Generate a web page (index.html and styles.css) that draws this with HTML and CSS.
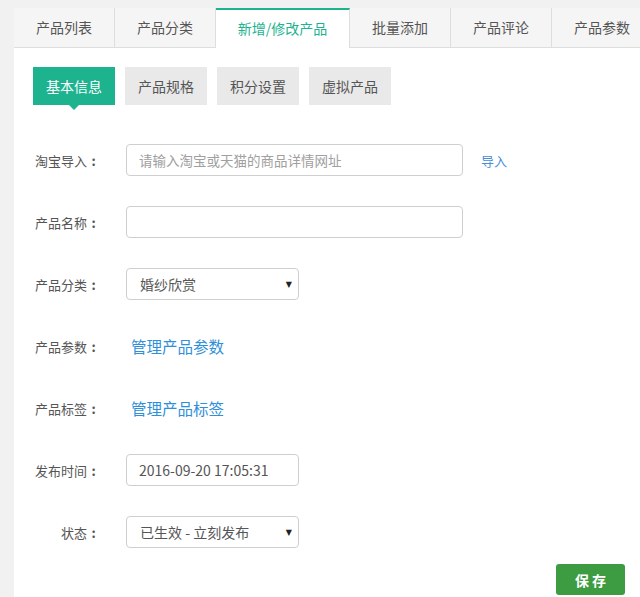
FILE: index.html
```html
<!DOCTYPE html>
<html lang="zh-CN">
<head>
<meta charset="utf-8">
<title>新增/修改产品</title>
<link rel="stylesheet" href="styles.css">
</head>
<body>
<div class="panel">
  <ul class="tabs">
    <li class="tab">产品列表</li>
    <li class="tab">产品分类</li>
    <li class="tab active">新增/修改产品</li>
    <li class="tab">批量添加</li>
    <li class="tab">产品评论</li>
    <li class="tab">产品参数</li>
  </ul>
  <div class="body">
    <div class="subtabs">
      <span class="subtab on">基本信息</span>
      <span class="subtab">产品规格</span>
      <span class="subtab">积分设置</span>
      <span class="subtab">虚拟产品</span>
    </div>
    <form class="form">
      <div class="row">
        <label class="lbl">淘宝导入<span class="colon">:</span></label>
        <input class="inp wide" type="text" placeholder="请输入淘宝或天猫的商品详情网址">
        <a class="imp" href="#">导入</a>
      </div>
      <div class="row">
        <label class="lbl">产品名称<span class="colon">:</span></label>
        <input class="inp wide" type="text">
      </div>
      <div class="row">
        <label class="lbl">产品分类<span class="colon">:</span></label>
        <span class="sel"><span class="seltext">婚纱欣赏</span><span class="arrow">▼</span></span>
      </div>
      <div class="row">
        <label class="lbl">产品参数<span class="colon">:</span></label>
        <a class="big" href="#">管理产品参数</a>
      </div>
      <div class="row">
        <label class="lbl">产品标签<span class="colon">:</span></label>
        <a class="big" href="#">管理产品标签</a>
      </div>
      <div class="row">
        <label class="lbl">发布时间<span class="colon">:</span></label>
        <input class="inp narrow" type="text" value="2016-09-20 17:05:31">
      </div>
      <div class="row">
        <label class="lbl">状态<span class="colon">:</span></label>
        <span class="sel"><span class="seltext">已生效 - 立刻发布</span><span class="arrow">▼</span></span>
      </div>
      <div class="actions">
        <button class="save" type="button">保 存</button>
      </div>
    </form>
  </div>
</div>
</body>
</html>
```
FILE: styles.css
```css
* { box-sizing: border-box; }
html, body { margin: 0; padding: 0; }
body {
  background: #f1f1f1;
  font-family: "Noto Sans CJK SC", "Liberation Sans", sans-serif;
  color: #555;
  height: 597px;
  overflow: hidden;
  padding: 8px 0 0 14px;
}
.panel {
  background: #fff;
  height: 589px;
  overflow: hidden;
}
.tabs {
  list-style: none;
  margin: 0;
  padding: 0;
  display: flex;
  height: 40px;
  background: #f5f5f5;
  border-bottom: 1px solid #dedede;
}
.tab {
  width: 101px;
  height: 39px;
  line-height: 39px;
  text-align: center;
  font-size: 14px;
  color: #555;
  border-right: 1px solid #dedede;
  flex: none;
}
.tab.active {
  width: 134px;
  background: #fff;
  color: #1db38f;
  border-top: 2px solid #1db38f;
  height: 40px;
  line-height: 36px;
}
.body {
  padding: 19px 0 0 19px;
}
.subtabs {
  display: flex;
  gap: 10px;
}
.subtab {
  position: relative;
  width: 82px;
  height: 38px;
  line-height: 38px;
  text-align: center;
  font-size: 14px;
  color: #555;
  background: #e9e9e9;
}
.subtab.on {
  background: #1db38f;
  color: #fff;
}
.subtab.on::after {
  content: "";
  position: absolute;
  left: 50%;
  bottom: -5px;
  margin-left: -5px;
  border-left: 5px solid transparent;
  border-right: 5px solid transparent;
  border-top: 5px solid #1db38f;
}
.form {
  margin: 39px 0 0 2px;
  display: flex;
  flex-direction: column;
  gap: 30px;
}
.row {
  display: flex;
  align-items: center;
  height: 32px;
}
.lbl {
  width: 65px;
  text-align: right;
  font-size: 13px;
  color: #555;
  margin-right: 26px;
  flex: none;
  white-space: nowrap;
}
.colon {
  display: inline-block;
  width: 13px;
  text-align: center;
  font-weight: bold;
}
.inp {
  height: 32px;
  border: 1px solid #cfcfcf;
  border-radius: 4px;
  padding: 0 12px;
  font-family: inherit;
  font-size: 14px;
  color: #555;
  outline: none;
}
.inp::placeholder { color: #a0a0a0; font-size: 13.5px; }
.wide { width: 337px; }
.narrow { width: 173px; }
.imp {
  margin-left: 18px;
  font-size: 13px;
  color: #4a8fd6;
  text-decoration: none;
}
.sel {
  position: relative;
  display: flex;
  align-items: center;
  width: 173px;
  height: 32px;
  border: 1px solid #cfcfcf;
  border-radius: 4px;
  padding: 0 6px 0 13px;
  font-size: 14px;
  color: #555;
}
.seltext { flex: 1; }
.arrow {
  font-size: 8px;
  color: #222;
  font-family: "DejaVu Sans", sans-serif;
}
.big {
  margin-left: 5px;
  font-size: 15.5px;
  color: #2f8fd9;
  text-decoration: none;
}
.actions {
  display: flex;
  justify-content: flex-end;
  padding-right: 15px;
  margin-top: -14px;
}
.save {
  width: 69px;
  height: 31px;
  border: none;
  border-radius: 3px;
  background: #3d9b41;
  color: #fff;
  font-family: inherit;
  font-size: 14px;
  font-weight: bold;
}
```
